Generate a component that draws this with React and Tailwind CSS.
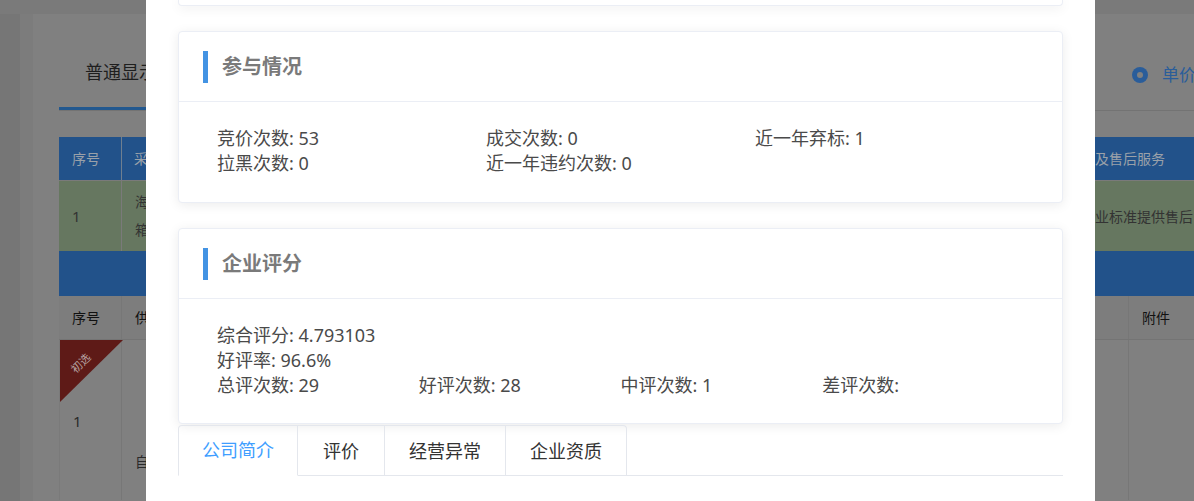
import React from 'react';

const font = { fontFamily: '"Noto Sans", "Noto Sans CJK SC", sans-serif' };

// Dimmed page that sits behind the dialog
const Backdrop = () => (
    <div className="absolute inset-0 bg-[#7a7a7a] flex flex-col">
        <div className="h-[14px] shrink-0" />
        <div className="flex flex-1">
            <div className="w-[20px] bg-[#767676]" />
            <div className="w-[13px] bg-[#7c7c7c]" />
            <div className="flex-1 bg-[#808080] flex flex-col pl-[26px]">
                {/* tabs row */}
                <div className="h-[97px] flex border-b border-[#737373]">
                    <div className="w-[87px] flex flex-col justify-end">
                        <div className="text-[18px] text-[#1e1e1e] leading-[24px] pl-[26px] pb-[23px] whitespace-nowrap">普通显示</div>
                        <div className="h-[3px] bg-[#22588f] w-[200px]" />
                    </div>
                    <div className="flex-1" />
                    <div className="flex items-center gap-[14px] pt-[26px] w-[62px]">
                        <span className="w-[16px] h-[16px] rounded-full bg-[#2a5d9a] flex items-center justify-center shrink-0">
                            <span className="w-[6px] h-[6px] rounded-full bg-[#808080]" />
                        </span>
                        <span className="text-[17px] text-[#2a5d9a] whitespace-nowrap">单价</span>
                    </div>
                </div>
                <div className="h-[26px]" />
                {/* table */}
                <div className="flex flex-col text-[14px]">
                    <div className="h-[43px] bg-[#22528a] flex text-[#9aa1a9]">
                        <div className="w-[63px] border-r border-[#6f7f90] flex items-center pl-[13px]">序号</div>
                        <div className="flex-1 flex items-center pl-[12px]">采</div>
                        <div className="w-[99px] flex items-center whitespace-nowrap overflow-hidden">及售后服务</div>
                    </div>
                    <div className="h-[71px] bg-[#667760] flex text-[#333] border-t border-[#7a7a7a]">
                        <div className="w-[63px] border-r border-[#7a7a7a] flex items-center pl-[13px] text-[15px]">1</div>
                        <div className="flex-1 flex flex-col justify-center pl-[13px] leading-[28px]">
                            <span>海</span>
                            <span>箱</span>
                        </div>
                        <div className="w-[99px] flex items-center whitespace-nowrap overflow-hidden">业标准提供售后</div>
                    </div>
                    <div className="h-[45px] bg-[#22528a]" />
                    <div className="h-[44px] bg-[#7d7d7d] flex text-[#111] border-b border-[#747474]">
                        <div className="w-[63px] border-r border-[#777] flex items-center pl-[13px]">序号</div>
                        <div className="flex-1 flex items-center pl-[13px]">供</div>
                        <div className="w-[66px] border-l border-[#777] flex items-center pl-[13px]">附件</div>
                    </div>
                    <div className="h-[160px] flex text-[#2a2a2a]">
                        <div className="w-[63px] border-r border-[#777] border-l border-l-[#7a7a7a] relative pl-[13px] pt-[70px] text-[15px]">
                            <div className="absolute left-0 top-0 w-[63px] h-[62px] bg-[#5e1a17] [clip-path:polygon(0_0,100%_0,0_100%)]" />
                            <span className="absolute left-[10px] top-[15px] text-[11px] text-[#b9a6a5] -rotate-45">初选</span>
                            1
                        </div>
                        <div className="flex-1 pl-[13px] pt-[111px]">自</div>
                        <div className="w-[66px] border-l border-[#777]" />
                    </div>
                </div>
            </div>
        </div>
    </div>
);

const Card = ({ title, children }) => (
    <div className="bg-white rounded-[4px] border border-[#ebeef5] shadow-[0_2px_12px_rgba(0,0,0,0.08)]">
        <div className="h-[70px] border-b border-[#ebeef5] flex items-center pl-[24px] gap-[14px]">
            <span className="w-[5px] h-[32px] bg-[#4393e3]" />
            <span className="text-[20px] font-bold text-[#7a7a7a] leading-[26px]">{title}</span>
        </div>
        {children}
    </div>
);

const Stat = ({ label, value, className = '' }) => (
    <div className={`whitespace-nowrap ${className}`}>{label}: {value}</div>
);

const tabs = [
    { name: '公司简介', w: 'w-[120px]' },
    { name: '评价', w: 'w-[87px]' },
    { name: '经营异常', w: 'w-[121px]' },
    { name: '企业资质', w: 'w-[121px]' },
];

const App = () => {
    return (
        <div className="relative w-full h-[501px] overflow-hidden" style={font}>
            <Backdrop />

            {/* Dialog */}
            <div className="absolute left-[146px] top-0 w-[949px] h-[501px] bg-white overflow-hidden">
                <div className="pl-[32px] w-[917px] flex flex-col">
                    <div className="h-[6px] bg-white rounded-b-[4px] border-x border-b border-[#ebeef5] shadow-[0_2px_12px_rgba(0,0,0,0.08)]" />
                    <div className="h-[25px]" />

                    <Card title="参与情况">
                        <div className="px-[38px] pt-[24px] pb-[26px] text-[18px] leading-[25px] text-[#4a4a4a]">
                            <div className="grid grid-cols-3">
                                <Stat label="竞价次数" value="53" />
                                <Stat label="成交次数" value="0" />
                                <Stat label="近一年弃标" value="1" />
                                <Stat label="拉黑次数" value="0" />
                                <Stat label="近一年违约次数" value="0" />
                            </div>
                        </div>
                    </Card>

                    <div className="h-[25px]" />

                    <Card title="企业评分">
                        <div className="px-[38px] pt-[24px] pb-[25px] text-[18px] leading-[25px] text-[#4a4a4a]">
                            <Stat label="综合评分" value="4.793103" />
                            <Stat label="好评率" value="96.6%" />
                            <div className="flex">
                                <Stat label="总评次数" value="29" className="w-[205px]" />
                                <Stat label="好评次数" value="28" className="w-[205px]" />
                                <Stat label="中评次数" value="1" className="w-[205px]" />
                                <Stat label="差评次数" value="" className="w-[205px]" />
                            </div>
                        </div>
                    </Card>

                    {/* Tabs */}
                    <div className="flex h-[51px] border-b border-[#e4e7ed] mt-[1px]">
                        {tabs.map((t, i) => (
                            <div
                                key={t.name}
                                className={`${t.w} h-[51px] flex items-center justify-center text-[18px] border-t border-r border-[#e4e7ed] ${i === 0 ? 'border-l rounded-tl-[4px] text-[#409eff] border-b border-b-white' : 'text-[#333]'} ${i === tabs.length - 1 ? 'rounded-tr-[4px]' : ''}`}
                            >
                                {t.name}
                            </div>
                        ))}
                    </div>
                </div>
            </div>
        </div>
    );
};

export default App;
